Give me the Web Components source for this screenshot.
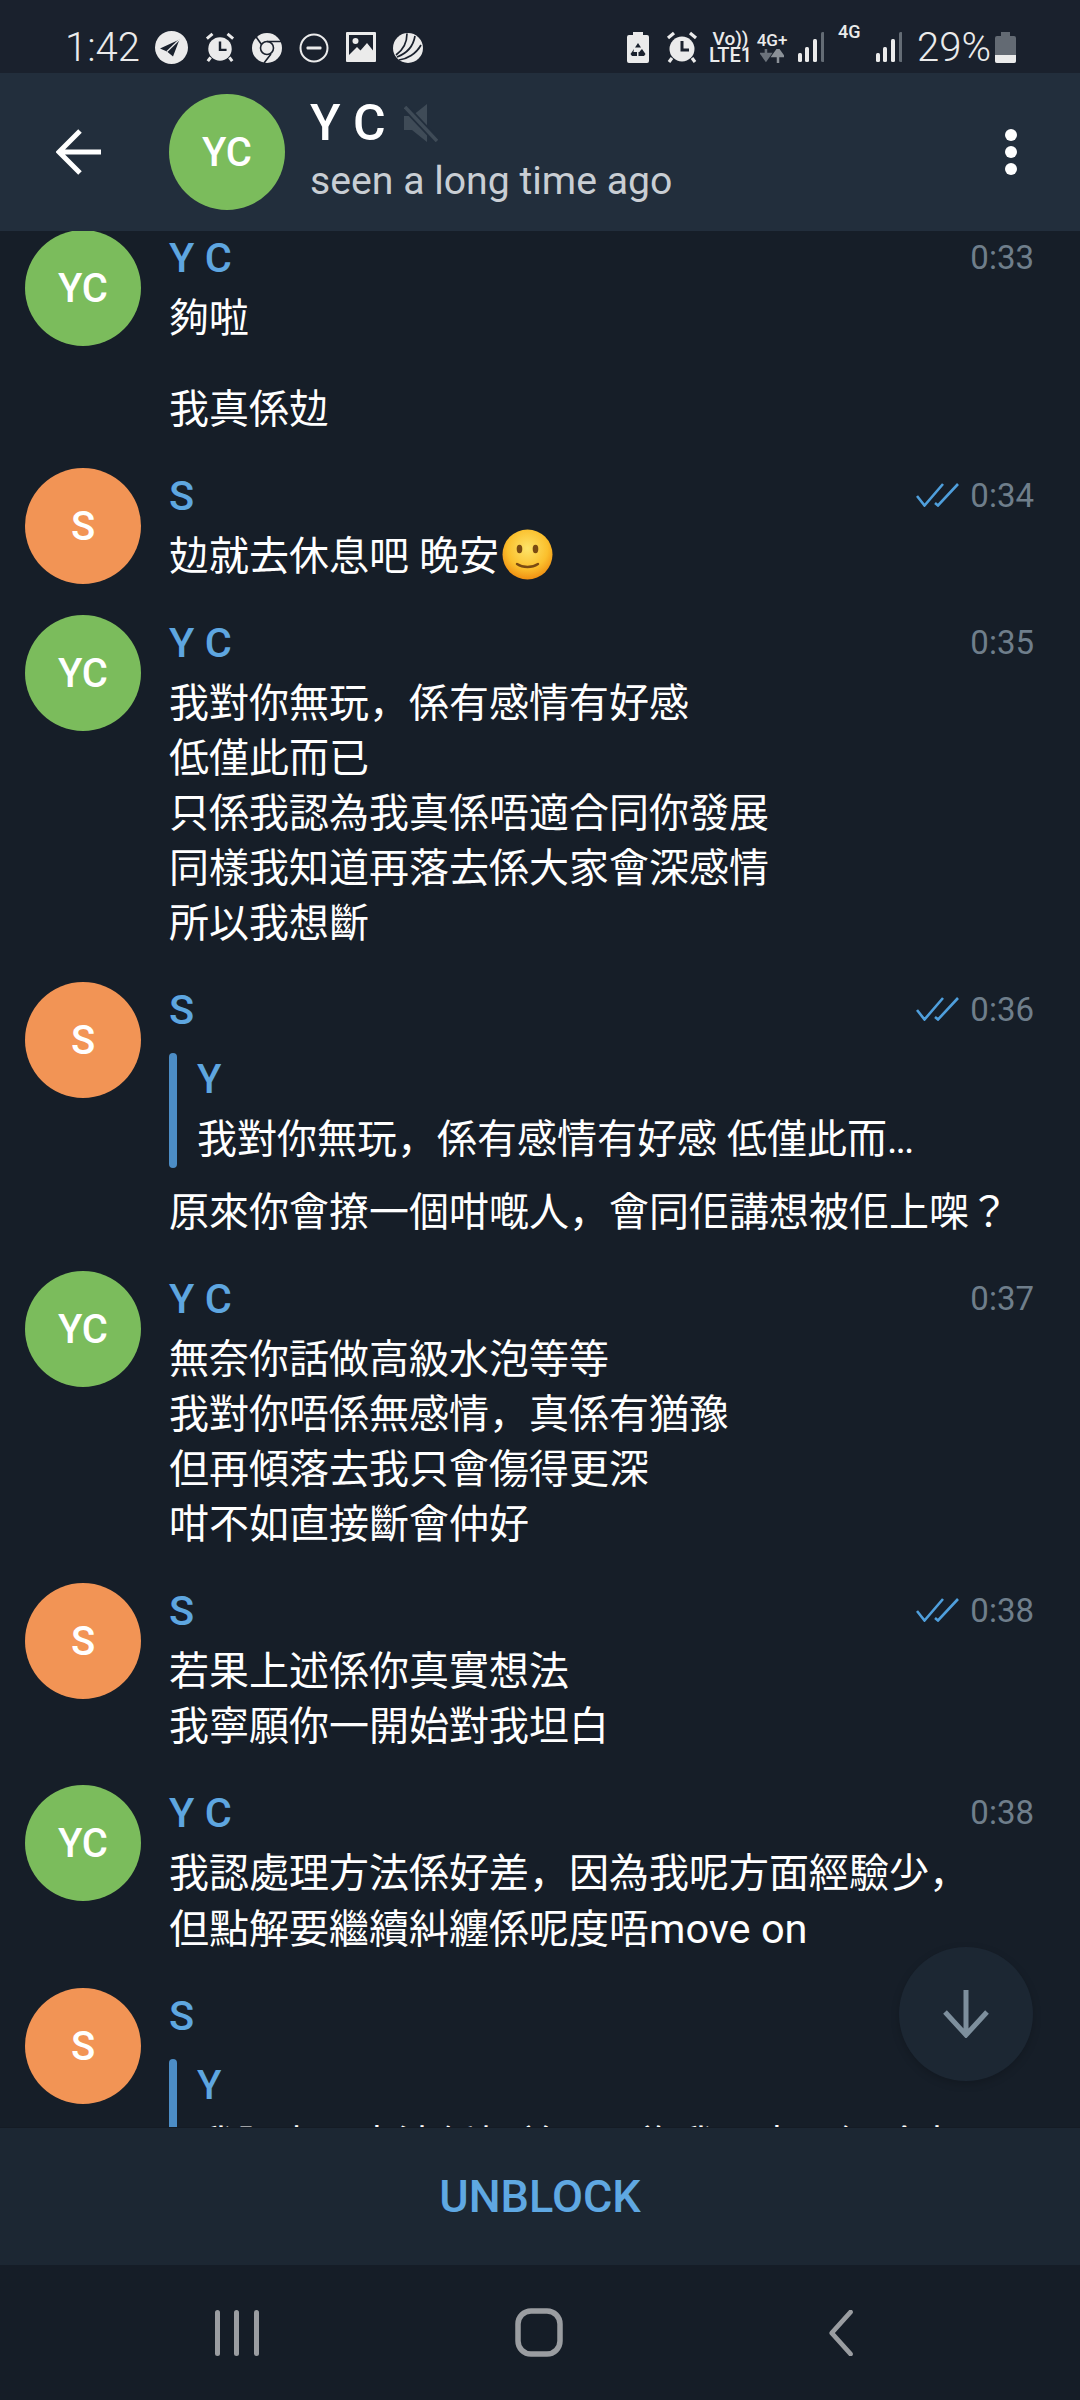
<!doctype html>
<html>
<head>
<meta charset="utf-8">
<title>Y C</title>
<style>
  html, body { margin: 0; width: 1080px; height: 2400px; overflow: hidden; background: #161e28; }
  body { font-family: Roboto, "Noto Sans CJK JP", sans-serif; color: #fff; }
  .latin { font-size: 41.500px; }
  .dots { letter-spacing: -2px; }
</style>
</head>
<body>
<tg-app>
  <tg-status-bar></tg-status-bar>
  <tg-chat-header name="Y C" initials="YC" status="seen a long time ago"></tg-chat-header>
  <tg-chat-list>
    <tg-message name="Y C" initials="YC" color="#7bbc5c" time="0:33">
      <tg-text>夠啦</tg-text>
      <tg-text spaced>我真係攰</tg-text>
    </tg-message>
    <tg-message name="S" initials="S" color="#f29455" time="0:34" read>
      <tg-text>攰就去休息吧 晚安<tg-emoji></tg-emoji></tg-text>
    </tg-message>
    <tg-message name="Y C" initials="YC" color="#7bbc5c" time="0:35">
      <tg-text>我對你無玩，係有感情有好感<br>低僅此而已<br>只係我認為我真係唔適合同你發展<br>同樣我知道再落去係大家會深感情<br>所以我想斷</tg-text>
    </tg-message>
    <tg-message name="S" initials="S" color="#f29455" time="0:36" read>
      <tg-quote name="Y">我對你無玩，係有感情有好感 低僅此而<span class="dots">...</span></tg-quote>
      <tg-text>原來你會撩一個咁嘅人，會同佢講想被佢上㗎？</tg-text>
    </tg-message>
    <tg-message name="Y C" initials="YC" color="#7bbc5c" time="0:37">
      <tg-text>無奈你話做高級水泡等等<br>我對你唔係無感情，真係有猶豫<br>但再傾落去我只會傷得更深<br>咁不如直接斷會仲好</tg-text>
    </tg-message>
    <tg-message name="S" initials="S" color="#f29455" time="0:38" read>
      <tg-text>若果上述係你真實想法<br>我寧願你一開始對我坦白</tg-text>
    </tg-message>
    <tg-message name="Y C" initials="YC" color="#7bbc5c" time="0:38">
      <tg-text>我認處理方法係好差，因為我呢方面經驗少，<br>但點解要繼續糾纏係呢度唔<span class="latin">move on</span></tg-text>
    </tg-message>
    <tg-message name="S" initials="S" color="#f29455">
      <tg-quote name="Y">我認處理方法係好差，因為我呢方面經驗少<span class="dots">...</span></tg-quote>
    </tg-message>
    <tg-scroll-button slot="overlay"></tg-scroll-button>
  </tg-chat-list>
  <tg-unblock-bar>UNBLOCK</tg-unblock-bar>
  <tg-nav-bar></tg-nav-bar>
</tg-app>

<script>
const ICON = '#ebebeb'
const STATUS_BG = '#1a212d'

const define = (tag, css, html) => {
  customElements.define(tag, class extends HTMLElement {
    connectedCallback() {
      if (this.shadowRoot) return
      const attrs = name => this.getAttribute(name) || ''
      const root = this.attachShadow({ mode: 'open' })
      root.innerHTML = `<style>${css}</style>${typeof html === 'function' ? html(attrs, this) : html}`
    }
  })
}

define('tg-app', `
  :host { display: flex; flex-direction: column; width: 1080px; height: 2400px; }
`, '<slot></slot>')

const statusIcons = {
  telegram: `<svg width="33" height="33" viewBox="0 0 33 33"><circle cx="16.5" cy="16.5" r="16.5" fill="${ICON}"/><path d="M24.500 8.500 5 17.500l7 3 6 5Z" fill="${STATUS_BG}"/><path d="M24.500 8.500 12 20.500" stroke="${ICON}" stroke-width="1.200"/></svg>`,
  alarm: (w, stroke) => `<svg width="${w}" height="33" viewBox="0 0 32 33"><circle cx="16" cy="18" r="12.500" fill="${ICON}"/><path d="M2 7 8 2M30 7l-6-5M6 27l-3 4M26 27l3 4" stroke="${ICON}" stroke-width="3.200" fill="none"/><path d="M16 10v9h7" stroke="${STATUS_BG}" stroke-width="${stroke}" fill="none"/></svg>`,
  chrome: `<svg width="30" height="33" viewBox="0 0 30 33"><circle cx="15" cy="17" r="15" fill="${ICON}"/><circle cx="15" cy="17" r="6.500" fill="${ICON}" stroke="${STATUS_BG}" stroke-width="1.600"/><path d="M15 10.500H29M9.500 13.500 3.500 5M19 23 12 32" stroke="${STATUS_BG}" stroke-width="1.600" fill="none"/></svg>`,
  dnd: `<svg width="30" height="33" viewBox="0 0 30 33"><circle cx="15" cy="17" r="13.500" fill="none" stroke="${ICON}" stroke-width="2"/><rect x="7.500" y="15.500" width="15" height="3" rx="1" fill="${ICON}"/></svg>`,
  image: `<svg width="30" height="30" viewBox="0 0 30 30"><path d="M1 0h28a1 1 0 0 1 1 1v28a1 1 0 0 1-1 1H1a1 1 0 0 1-1-1V1a1 1 0 0 1 1-1Z" fill="${ICON}"/><path d="M3 3h24v15.500L21 11l-6.500 7.500-3.500-3.500-8 8Z" fill="${STATUS_BG}"/><circle cx="9.500" cy="9" r="3" fill="${ICON}"/></svg>`,
  swoosh: `<svg width="30" height="33" viewBox="0 0 30 33"><circle cx="15" cy="17" r="15" fill="${ICON}"/><path d="M3 24C10 19 14 11 14 2.500M4 26C12 23 20 17 22 5M6 29C14 28 23 23 28 14" stroke="${STATUS_BG}" stroke-width="1.700" fill="none"/></svg>`,
  recycle: `<svg width="22" height="31" viewBox="0 0 22 31"><path d="M6 0h10v3h4a2 2 0 0 1 2 2v24a2 2 0 0 1-2 2H2a2 2 0 0 1-2-2V5a2 2 0 0 1 2-2h4Z" fill="${ICON}"/><path d="M11 11 8 15.500h6ZM7 17 3.500 22l1.500 2h5v-4H6.500ZM15 17l-2.500 2.500L13 20h-1.500v4H17l1.500-2Z" fill="${STATUS_BG}"/></svg>`,
  arrows: `<svg width="24" height="14" viewBox="0 0 24 14"><path d="M7 0v8M2 6l5 7 5-7Z" stroke="#6b727b" stroke-width="3" fill="#6b727b" transform="scale(.85)"/><path d="M18 14V6M13 7l5-7 5 7Z" stroke="#8b9198" stroke-width="2.500" fill="#8b9198"/></svg>`,
  signal: `<svg width="26" height="30" viewBox="0 0 26 30"><rect x="0" y="21" width="4" height="9" rx="1.500" fill="${ICON}"/><rect x="7" y="15" width="4" height="15" rx="1.500" fill="${ICON}"/><rect x="15" y="7" width="4" height="23" rx="1.500" fill="${ICON}"/><rect x="23" y="0" width="3.500" height="30" rx="1.500" fill="#646c75"/></svg>`,
  battery: `<svg width="21" height="31" viewBox="0 0 21 31"><path d="M6 0h9v4h4a2 2 0 0 1 2 2v23a2 2 0 0 1-2 2H2a2 2 0 0 1-2-2V6a2 2 0 0 1 2-2h4Z" fill="#636a73"/><path d="M0 23h21v6a2 2 0 0 1-2 2H2a2 2 0 0 1-2-2Z" fill="${ICON}"/></svg>`
}

define('tg-status-bar', `
  :host { display: flex; justify-content: space-between; align-items: center; box-sizing: border-box; height: 73px; padding: 21px 64px 0 65px; background: ${STATUS_BG}; color: ${ICON}; }
  .group { display: flex; align-items: center; }
  .time { width: 90px; font-size: 40px; font-weight: 300; }
  .left svg { margin-right: 17px; flex: none; }
  .right > * { flex: none; }
  .volte { display: flex; flex-direction: column; align-items: center; width: 39px; margin-left: 13px; font-size: 19px; font-weight: 500; line-height: 16px; white-space: nowrap; }
  .volte b { font-weight: 500; font-size: 20px; }
  .net { display: flex; flex-direction: column; align-items: center; width: 30px; margin-left: 7px; font-size: 17px; font-weight: 500; line-height: 17px; }
  .net4g { align-self: flex-start; width: 23px; margin-left: 14px; font-size: 18px; font-weight: 500; line-height: 16px; }
  .pct { width: 71px; margin-left: 15px; font-size: 40px; font-weight: 300; white-space: nowrap; }
  .m17 { margin-left: 17px; } .m11 { margin-left: 11px; } .m15 { margin-left: 15px; } .m7 { margin-left: 7px; }
`, `
  <div class="group left">
    <span class="time">1:42</span>
    ${statusIcons.telegram}${statusIcons.alarm(30, 2.6)}${statusIcons.chrome}${statusIcons.dnd}${statusIcons.image}${statusIcons.swoosh}
  </div>
  <div class="group right">
    ${statusIcons.recycle}
    <span class="m17" style="display:flex">${statusIcons.alarm(32, 3)}</span>
    <span class="volte"><span>Vo))</span><b>LTE1</b></span>
    <span class="net"><span>4G+</span>${statusIcons.arrows}</span>
    <span class="m11" style="display:flex">${statusIcons.signal}</span>
    <span class="net4g">4G</span>
    <span class="m15" style="display:flex">${statusIcons.signal}</span>
    <span class="pct">29%</span>
    <span class="m7" style="display:flex">${statusIcons.battery}</span>
  </div>
`)

define('tg-chat-header', `
  :host { display: flex; align-items: center; box-sizing: border-box; height: 158px; padding: 0 63px 0 56px; background: #222e3c; }
  .back { flex: none; margin-right: 68px; }
  .avatar { display: flex; align-items: center; justify-content: center; flex: none; width: 116px; height: 116px; border-radius: 50%; background: #7bbc5c; font-size: 40px; font-weight: 500; margin-right: 25px; }
  .info { flex: 1; min-width: 0; }
  .title { display: flex; align-items: center; height: 58px; font-size: 50px; font-weight: 500; }
  .title svg { margin-left: 18px; }
  .sub { height: 58px; line-height: 58px; font-size: 39.200px; color: #c9ced4; }
  .dots { display: flex; flex-direction: column; gap: 5px; flex: none; }
  .dots i { width: 12px; height: 12px; border-radius: 50%; background: #fff; }
`, attrs => `
  <svg class="back" width="45" height="46" viewBox="0 0 45 46" fill="none" stroke="#fff" stroke-width="5"><path d="M45 23H3M24 2 3 23l21 21"/></svg>
  <div class="avatar">${attrs('initials')}</div>
  <div class="info">
    <div class="title">${attrs('name')}<svg width="34" height="38" viewBox="0 0 34 38"><path d="M0 12h8L23 0v38L8 26H0Z" fill="#3f4b57"/><path d="M1 3 33 37" stroke="#222e3c" stroke-width="7"/><path d="M1 3 33 37" stroke="#3f4b57" stroke-width="3.500"/></svg></div>
    <div class="sub">${attrs('status')}</div>
  </div>
  <div class="dots"><i></i><i></i><i></i></div>
`)

define('tg-chat-list', `
  :host { display: block; position: relative; flex: 1; min-height: 0; overflow: hidden; background: #161e28; }
  .scroll { margin-top: -1px; }
`, '<div class="scroll"><slot></slot></div><slot name="overlay"></slot>')

define('tg-message', `
  :host { display: flex; gap: 28px; box-sizing: border-box; padding: 0 46px 31px 25px; }
  .avatar { display: flex; align-items: center; justify-content: center; flex: none; width: 116px; height: 116px; border-radius: 50%; font-size: 40px; font-weight: 500; }
  .body { flex: 1; min-width: 0; }
  .head { display: flex; align-items: center; height: 54px; margin-bottom: 7px; }
  .name { flex: 1; font-size: 41.500px; font-weight: 500; color: #5ea6e0; }
  .time { font-size: 33px; color: #6f7e8b; }
  .ticks { margin-right: 11px; }
`, (attrs, el) => `
  <div class="avatar" style="background:${attrs('color')}">${attrs('initials')}</div>
  <div class="body">
    <div class="head">
      <span class="name">${attrs('name')}</span>
      ${el.hasAttribute('read') ? '<svg class="ticks" width="43" height="24" viewBox="0 0 43 24" fill="none" stroke="#4f9fdc" stroke-width="2.600"><path d="M1 13l7.500 9.500L27 1M19 20l3 2.500L42 1"/></svg>' : ''}
      <span class="time">${attrs('time')}</span>
    </div>
    <slot></slot>
  </div>
`)

define('tg-text', `
  :host { display: block; font-size: 40px; line-height: 55px; color: #fff; white-space: nowrap; }
  :host([spaced]) { margin-top: 36px; }
`, '<slot></slot>')

define('tg-quote', `
  :host { display: block; box-sizing: border-box; height: 115px; margin: 17px 0 17px; padding-left: 28px; position: relative; font-size: 40px; white-space: nowrap; }
  .bar { position: absolute; left: 0; top: 0; bottom: 0; width: 8px; border-radius: 4px; background: #4c8dc6; }
  .name { height: 54px; line-height: 54px; font-weight: 500; color: #5ea6e0; }
  .text { margin-top: 5px; line-height: 55px; color: #fff; }
`, attrs => `
  <div class="bar"></div>
  <div class="name">${attrs('name')}</div>
  <div class="text"><slot></slot></div>
`)

define('tg-emoji', `
  :host { display: inline-block; width: 51px; height: 51px; margin-left: 3px; vertical-align: -10px; }
  svg { display: block; }
`, `
  <svg width="51" height="51" viewBox="0 0 51 51">
    <defs><radialGradient id="face" cx="50%" cy="38%" r="62%"><stop offset="0" stop-color="#fde46a"/><stop offset=".65" stop-color="#fbc02d"/><stop offset="1" stop-color="#ef8f12"/></radialGradient></defs>
    <circle cx="25.500" cy="25.500" r="25" fill="url(#face)"/>
    <ellipse cx="17.500" cy="20" rx="2.800" ry="4.200" fill="#7a4a12"/>
    <ellipse cx="33.500" cy="20" rx="2.800" ry="4.200" fill="#7a4a12"/>
    <path d="M15 35c6 4 15 4 21 0" fill="none" stroke="#7a4a12" stroke-width="2.400" stroke-linecap="round"/>
  </svg>
`)

define('tg-scroll-button', `
  :host { position: absolute; right: 47px; bottom: 46px; width: 134px; height: 134px; border-radius: 50%; background: #1c2733; box-shadow: 0 3px 8px rgba(0, 0, 0, .18); display: flex; align-items: center; justify-content: center; }
`, `
  <svg width="46" height="48" viewBox="0 0 46 48" fill="none" stroke="#7d8f9d" stroke-width="5"><path d="M23 0v44M2 22l21 23 21-23"/></svg>
`)

define('tg-unblock-bar', `
  :host { display: flex; align-items: center; justify-content: center; height: 138px; background: #1c2733; border-top: 1px solid #141b24; box-sizing: border-box; font-size: 45px; font-weight: 500; color: #5fa8e2; }
`, '<slot></slot>')

define('tg-nav-bar', `
  :host { display: flex; align-items: center; justify-content: space-between; box-sizing: border-box; height: 135px; padding: 0 226px 0 215px; background: #151d27; }
  svg { display: block; }
  .home { margin-right: 9px; }
`, `
  <svg width="44" height="46" viewBox="0 0 44 46" fill="#9a9da1"><rect x="0" width="5" height="46" rx="2.500"/><rect x="19" width="5" height="46" rx="2.500"/><rect x="39" width="5" height="46" rx="2.500"/></svg>
  <svg class="home" width="48" height="49" viewBox="0 0 48 49" fill="none" stroke="#9a9da1" stroke-width="5.500"><rect x="3" y="3" width="42" height="43" rx="13"/></svg>
  <svg width="26" height="46" viewBox="0 0 26 46" fill="none" stroke="#9a9da1" stroke-width="5" stroke-linecap="round" stroke-linejoin="round"><path d="M24 2 3 23l21 21" transform="matrix(.9 0 0 1 1 0)"/></svg>
`)
</script>
</body>
</html>
